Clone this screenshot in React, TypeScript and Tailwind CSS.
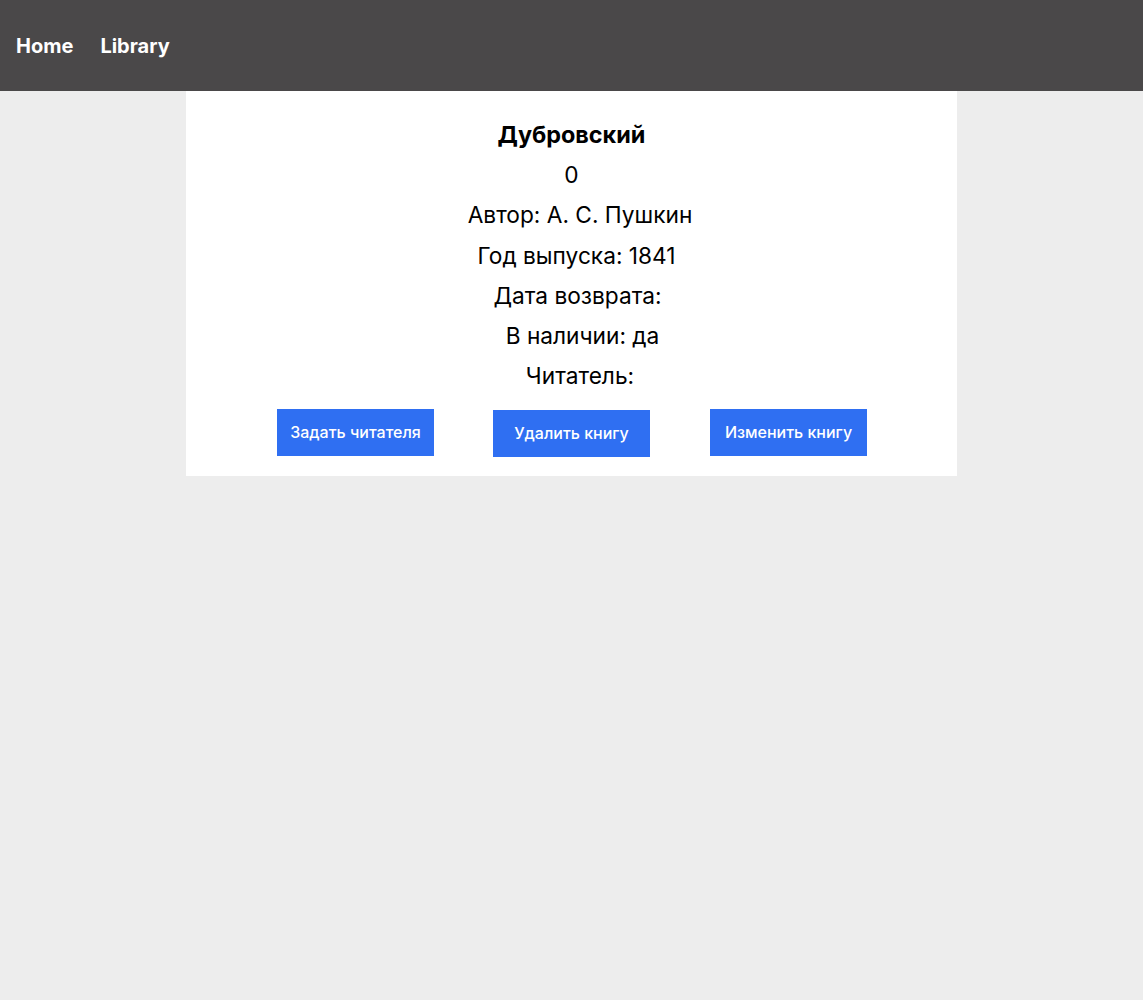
export default function App() {
  const lines: { text: string; shift: string }[] = [
    { text: '0', shift: '' },
    { text: 'Автор: А. С. Пушкин', shift: 'pl-[17px]' },
    { text: 'Год выпуска: 1841', shift: 'pl-[10px]' },
    { text: 'Дата возврата:', shift: 'pl-[12px]' },
    { text: 'В наличии: да', shift: 'pl-[22px]' },
    { text: 'Читатель:', shift: 'pl-[17px]' },
  ];

  return (
    <div className="min-h-[1000px] bg-[#ededed] font-['Inter',sans-serif] text-black">
      <header className="h-[91px] bg-[#4a4849] flex items-center gap-[27px] px-4">
        <a className="text-white text-[20px] font-bold">Home</a>
        <a className="text-white text-[20px] font-bold">Library</a>
      </header>

      <div className="mx-auto w-[771px] bg-white pt-6 pb-[19px] flex flex-col items-center">
        <div className="text-[23.4px] font-bold leading-[40px]">Дубровский</div>
        {lines.map((l, i) => (
          <div key={i} className={`text-[22.7px] leading-[40.3px] ${l.shift}`}>
            {l.text}
          </div>
        ))}

        <div className="flex items-start mt-[12px] pl-px">
          <button className="w-[157px] h-[47px] bg-[#2f6ff2] text-white text-[16px] font-medium">
            Задать читателя
          </button>
          <button className="w-[157px] h-[47px] mt-px ml-[59px] bg-[#2f6ff2] text-white text-[16px] font-medium">
            Удалить книгу
          </button>
          <button className="w-[157px] h-[47px] ml-[60px] bg-[#2f6ff2] text-white text-[16px] font-medium">
            Изменить книгу
          </button>
        </div>
      </div>
    </div>
  );
}
